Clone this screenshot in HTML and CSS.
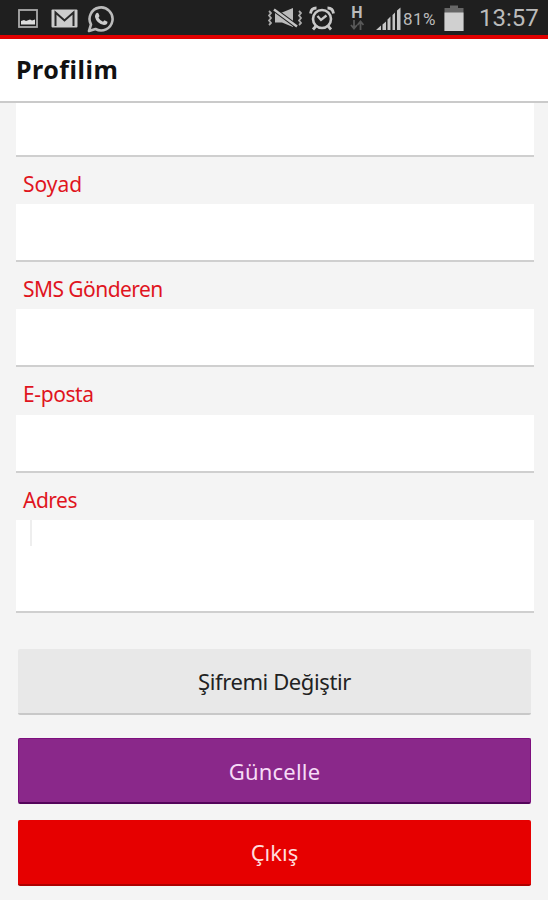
FILE: index.html
```html
<!DOCTYPE html>
<html lang="tr">
<head>
  <meta charset="UTF-8">
  <meta name="viewport" content="width=device-width, initial-scale=1.0">
  <title>Profilim</title>
  <link rel="stylesheet" href="styles.css">
</head>
<body>
  <div class="statusbar">
    <div class="notifications">
      <svg class="icon-image" width="20" height="19" viewBox="0 0 20 19">
        <rect x="1" y="1" width="18" height="17" fill="#1f1f1f" stroke="#aaa" stroke-width="1.800"/>
        <path d="M3 15.500V12L6 11L8 12L12 10.500L14 11.500L17 10.500V15.500Z" fill="#ddd"/>
      </svg>
      <svg class="icon-mail" width="27" height="19" viewBox="0 0 27 19">
        <rect x="0.500" y="0.500" width="26" height="18" rx="1" fill="#ccc"/>
        <path d="M4.500 17V3.500L13.500 11.500L22.500 3.500V17" fill="none" stroke="#292929" stroke-width="2"/>
      </svg>
      <svg class="icon-whatsapp" width="28" height="28" viewBox="0 0 28 28">
        <path d="M2 26L4 19.500A11.500 11.500 0 1 1 8.500 24Z" fill="#1f1f1f" stroke="#bbb" stroke-width="2.600" stroke-linejoin="round"/>
        <path d="M9 8.500Q10.500 7 11.500 8.500L12.500 11L11.500 12.700Q13 15.500 16 16.700L17.500 15.200L20.500 16.700Q20.500 20 17 20Q9.500 18.500 8 12Q7.800 10 9 8.500Z" fill="#ccc"/>
      </svg>
    </div>
    <div class="system">
      <svg class="icon-mute" width="36" height="22" viewBox="0 0 36 22">
        <path d="M2 4L4 6L2 8.500L4 11L2 13.500L4 16L2 18M32 4L34 6L32 8.500L34 11L32 13.500L34 16L32 18" fill="none" stroke="#aaa" stroke-width="1.800"/>
        <path d="M8 5.500H15L26 1V20L15 15.500H8Z" fill="#bbb"/>
        <path d="M7 2.500L30 19.500" stroke="#1f1f1f" stroke-width="4.600"/>
        <path d="M7 2.500L30 19.500" stroke="#c5c5c5" stroke-width="2.400"/>
      </svg>
      <svg class="icon-alarm" width="26" height="25" viewBox="0 0 26 25">
        <circle cx="13" cy="13" r="9" fill="none" stroke="#c8c8c8" stroke-width="2.600"/>
        <path d="M1.500 7.500Q2 2 7.500 2M18.500 2Q24 2 24.500 7.500M7 20L4 23.500M19 20L22 23.500" fill="none" stroke="#c8c8c8" stroke-width="2.800"/>
        <path d="M8.500 10L12 14L17.500 9.500" fill="none" stroke="#c8c8c8" stroke-width="2.300"/>
      </svg>
      <div class="network">
        <span>H</span>
        <svg width="14" height="10" viewBox="0 0 14 10">
          <path d="M4 0V8M1 5L4 8.500L7 5M10.500 10V2M7.500 5L10.500 1.500L13.500 5" fill="none" stroke="#585858" stroke-width="1.800"/>
        </svg>
      </div>
      <svg class="icon-signal" width="26" height="24" viewBox="0 0 26 24">
        <path d="M0 23L5 18.500V23ZM6.500 17.500L10 14.500V23H6.500ZM11.500 12.500L14.500 9.500V23H11.500ZM16.500 8L19 5.500V23H16.500ZM21 3.500L24.500 0.500V23H21Z" fill="#c5c5c5"/>
      </svg>
      <span class="percent">81%</span>
      <svg class="icon-battery" width="20" height="27" viewBox="0 0 20 27">
        <path d="M0.500 3H6V0.500H14V3H19.500V26H0.500Z" fill="#666"/>
        <rect x="0.500" y="7.500" width="19" height="18.500" fill="#d0d0d0"/>
      </svg>
      <span class="clock">13:57</span>
    </div>
  </div>

  <header class="header">
    <h1>Profilim</h1>
  </header>

  <form class="profile">
    <div class="input input-first"></div>

    <div class="label"><span class="soyad">Soyad</span></div>
    <div class="input"></div>

    <div class="label"><span class="sms">SMS Gönderen</span></div>
    <div class="input"></div>

    <div class="label"><span class="eposta">E-posta</span></div>
    <div class="input"></div>

    <div class="label"><span class="adres">Adres</span></div>
    <div class="input input-address"><div class="caret"></div></div>

    <div class="actions">
      <button type="button" class="btn btn-password">Şifremi Değiştir</button>
      <button type="button" class="btn btn-update">Güncelle</button>
      <button type="button" class="btn btn-exit">Çıkış</button>
    </div>
  </form>
</body>
</html>
```
FILE: styles.css
```css
* {
  box-sizing: border-box;
}
body {
  margin: 0;
  height: 900px;
  overflow: hidden;
  background: #f4f4f4;
  font-family: "Noto Sans", sans-serif;
}
svg {
  display: block;
  flex: none;
}

/* status bar */
.statusbar {
  display: flex;
  justify-content: space-between;
  height: 39px;
  padding: 0 8px 0 18px;
  background: #1f1f1f;
  border-bottom: 4px solid #e00000;
  color: #bbb;
  font-family: Roboto, sans-serif;
}
.notifications, .system {
  display: flex;
  align-items: flex-start;
}
.icon-image {
  margin-top: 9px;
}
.icon-mail {
  margin: 9px 0 0 13px;
}
.icon-whatsapp {
  margin: 5px 0 0 9px;
}
.icon-mute {
  margin-top: 7px;
}
.icon-alarm {
  margin: 6px 0 0 6px;
}
.network {
  width: 14px;
  margin: 5px 0 0 15px;
  text-align: center;
  font-size: 16px;
  line-height: 15px;
  font-weight: bold;
}
.network span {
  display: block;
}
.icon-signal {
  margin: 7px 0 0 12px;
}
.percent {
  width: 36px;
  margin-left: 1px;
  font-size: 17px;
  line-height: 38px;
  letter-spacing: 0.5px;
}
.icon-battery {
  margin: 5px 0 0 5px;
}
.clock {
  width: 61px;
  margin-left: 15px;
  font-size: 24px;
  line-height: 37px;
  white-space: nowrap;
}

/* title */
.header {
  height: 64px;
  padding-left: 16px;
  background: #fff;
  border-bottom: 2px solid #cacaca;
}
h1 {
  margin: 0;
  font-size: 25px;
  line-height: 61px;
  font-weight: bold;
  letter-spacing: 0.5px;
  color: #111;
}

/* form */
.profile {
  padding: 0 14px 0 16px;
}
.input {
  height: 58px;
  background: #fff;
  border-bottom: 2px solid #cfcfcf;
}
.input-first {
  height: 53.5px;
}
.input-address {
  height: 93px;
  padding-left: 14px;
}
.caret {
  width: 2px;
  height: 26px;
  background: #eee;
}
.label {
  height: 47.4px;
  padding-left: 7px;
  font-size: 21px;
  line-height: 54px;
  color: #e0141e;
}
.sms {
  letter-spacing: -0.55px;
}
.eposta {
  letter-spacing: -0.4px;
}
.adres {
  letter-spacing: -0.5px;
}

/* buttons */
.actions {
  display: flex;
  flex-direction: column;
  padding: 36px 3px 0 2px;
}
.btn {
  height: 66px;
  padding: 0;
  border: 0;
  border-bottom: 2px solid #c8c8c8;
  border-radius: 2px;
  font-family: inherit;
  font-size: 22px;
}
.btn-password {
  background: #e8e8e8;
  color: #222;
  letter-spacing: -0.4px;
}
.btn-update {
  margin-top: 23px;
  background: #8a288a;
  border: 1px solid #7d0e7d;
  border-bottom: 2px solid #53045a;
  color: #f6dcf6;
  letter-spacing: 0.2px;
}
.btn-exit {
  margin-top: 15.5px;
  background: #e60000;
  border-bottom-color: #ae0000;
  color: #ffdcdc;
}
```
